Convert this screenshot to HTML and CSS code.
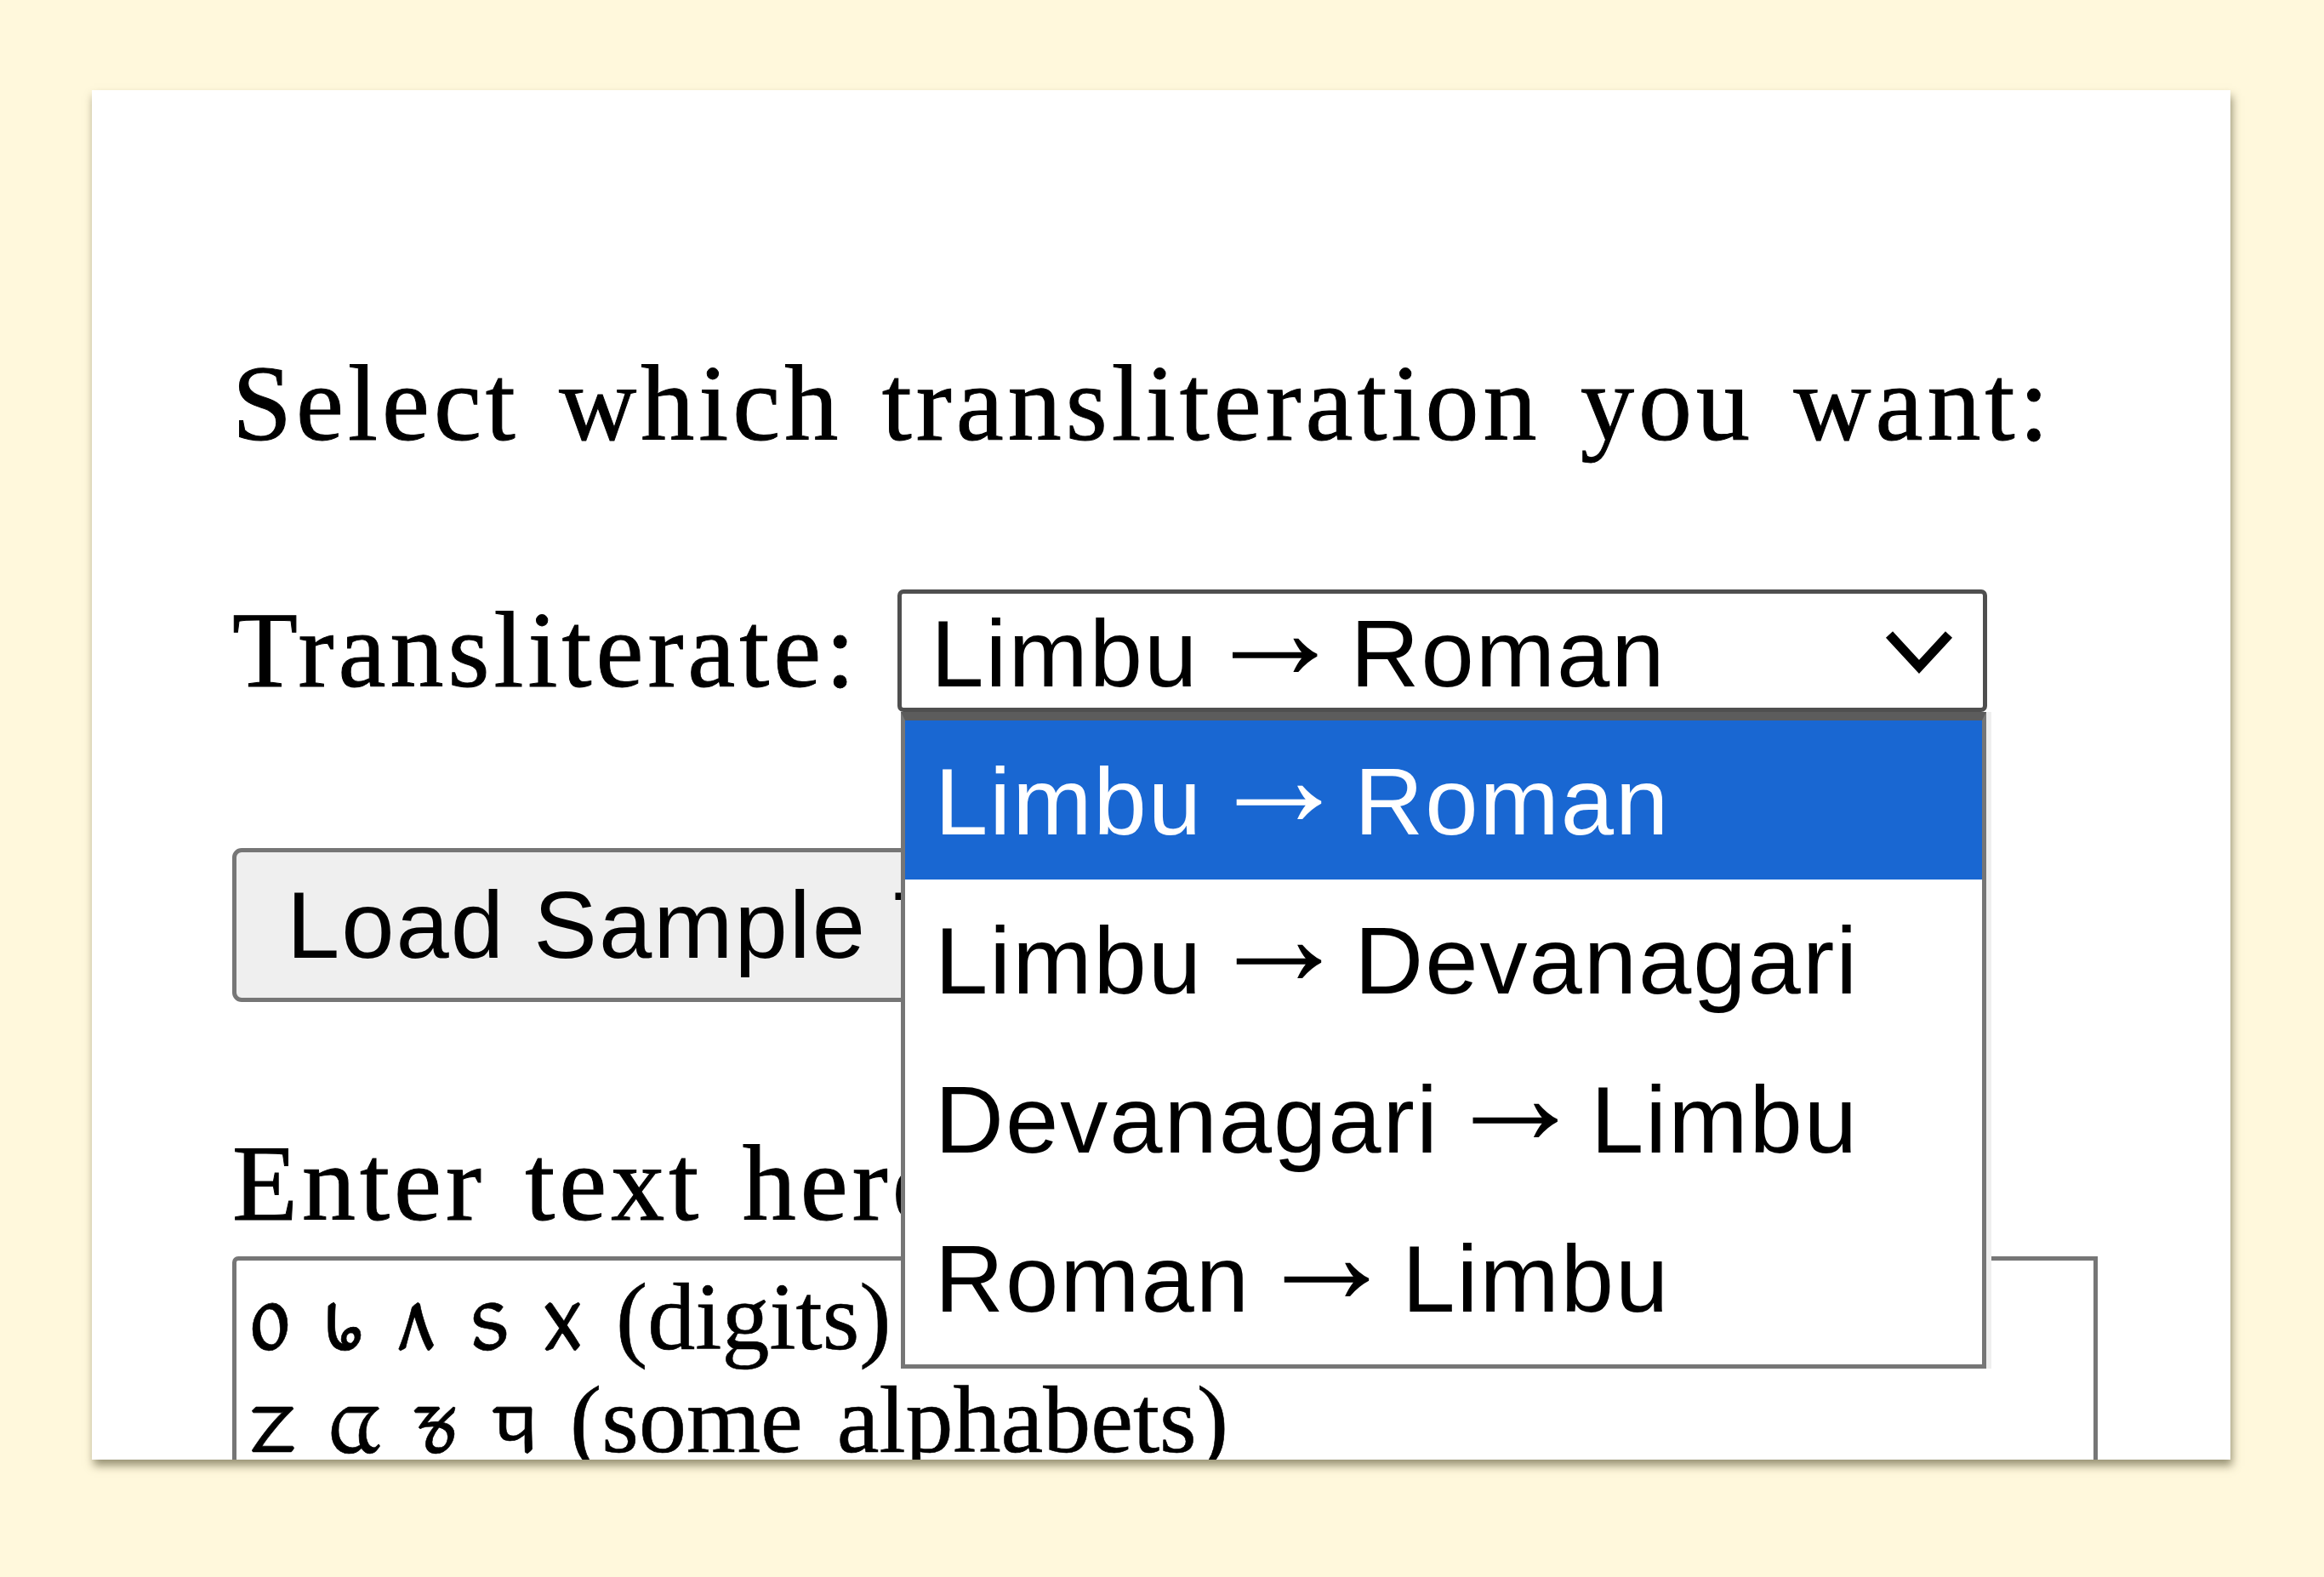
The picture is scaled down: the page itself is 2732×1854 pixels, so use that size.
FILE: index.html
```html
<!DOCTYPE html>
<html lang="en">
<head>
<meta charset="utf-8">
<title>Limbu Transliteration</title>
<link rel="stylesheet" href="styles.css">
</head>
<body>
<main class="card">
  <p class="prompt">Select which transliteration you want:</p>
  <div class="row">
    <span class="label">Transliterate:</span>
    <div class="select">
      <span class="value">Limbu <span class="arrow">→</span> Roman</span>
      <svg class="chevron" width="80" height="52" viewBox="0 0 80 52" aria-hidden="true">
        <polyline points="5,5 40,43 75,5" fill="none" stroke="#000" stroke-width="11" stroke-linejoin="miter"/>
      </svg>
    </div>
  </div>
  <button class="sample-btn" type="button">Load Sample Text</button>
  <p class="enter-label">Enter text here:</p>
  <div class="textarea">
    <div class="line">᥆ ᥇ ᥈ ᥉ ᥊ (digits)</div>
    <div class="line">ᤁ ᤂ ᤃ ᤄ (some alphabets)</div>
  </div>
  <ul class="dropdown">
    <li class="option selected"><span class="value">Limbu <span class="arrow">→</span> Roman</span></li>
    <li class="option"><span class="value">Limbu <span class="arrow">→</span> Devanagari</span></li>
    <li class="option"><span class="value">Devanagari <span class="arrow">→</span> Limbu</span></li>
    <li class="option"><span class="value">Roman <span class="arrow">→</span> Limbu</span></li>
  </ul>
</main>
</body>
</html>
```
FILE: styles.css
```css
html, body {
  margin: 0;
}
body {
  background: #fff8dc;
  width: 2732px;
  height: 1854px;
  overflow: hidden;
  padding: 106px 0 0 108px;
  box-sizing: border-box;
}
.card {
  position: relative;
  width: 2514px;
  height: 1610px;
  background: #fff;
  box-shadow: 2px 7px 10px rgba(95, 90, 60, 0.65);
  overflow: hidden;
  box-sizing: border-box;
  padding: 296px 156px 0 165px;
  display: flex;
  flex-direction: column;
  align-items: flex-start;
}
.card > * {
  flex-shrink: 0;
}
.prompt,
.label,
.enter-label {
  margin: 0;
  font-family: "Liberation Serif", serif;
  font-size: 126px;
  line-height: 145px;
  letter-spacing: 5px;
  word-spacing: 10px;
  color: #000;
  white-space: nowrap;
  -webkit-text-stroke: 1px #000;
}
.row {
  display: flex;
  align-items: baseline;
  margin-top: 145px;
}
.label {
  margin-right: 45px;
}
.select {
  width: 1281px;
  height: 144px;
  box-sizing: border-box;
  border: 5px solid #4f4f4f;
  border-radius: 7px;
  display: flex;
  align-items: center;
  justify-content: space-between;
  padding: 8px 35px 0 34px;
  font-family: "Liberation Sans", Arial, sans-serif;
  font-size: 112px;
  line-height: 112px;
  letter-spacing: 2px;
  color: #000;
  white-space: nowrap;
}
.value {
  word-spacing: -28px;
  white-space: pre;
}
.arrow {
  display: inline-block;
  font-size: 1.5em;
  line-height: 0;
  letter-spacing: 0;
  word-spacing: 0;
  vertical-align: 0.055em;
}
.chevron {
  display: block;
  margin-top: -4px;
}
.sample-btn {
  margin-top: 160px;
  height: 181px;
  box-sizing: border-box;
  border: 5px solid #767676;
  border-radius: 11px;
  background: #efefef;
  padding: 0 59px;
  font-family: "Liberation Sans", Arial, sans-serif;
  font-size: 112px;
  line-height: 112px;
  letter-spacing: 2px;
  color: #000;
  white-space: nowrap;
}
.enter-label {
  margin-top: 141px;
}
.textarea {
  margin-top: 13px;
  width: 2193px;
  height: 420px;
  box-sizing: border-box;
  border: 5px solid #767676;
  border-radius: 7px 0 0 0;
  padding: 6px 16px;
  font-family: "Liberation Serif", serif;
  font-size: 112px;
  line-height: 121px;
  word-spacing: 12px;
  color: #000;
  white-space: nowrap;
  -webkit-text-stroke: 0.6px #000;
}
.dropdown {
  position: absolute;
  left: 951px;
  top: 731px;
  width: 1276px;
  margin: 0;
  padding: 0 0 9px;
  list-style: none;
  box-sizing: border-box;
  background: #fff;
  border: 5px solid #767676;
  border-top: 10px solid #5c5c5c;
  box-shadow: 6px 0 0 #efefef;
  font-family: "Liberation Sans", Arial, sans-serif;
  font-size: 112px;
  line-height: 112px;
  letter-spacing: 2px;
  color: #000;
}
.option {
  height: 187px;
  display: flex;
  align-items: center;
  padding: 4px 0 0 35px;
  box-sizing: border-box;
}
.option.selected {
  background: #1967d2;
  color: #fff;
}
```
